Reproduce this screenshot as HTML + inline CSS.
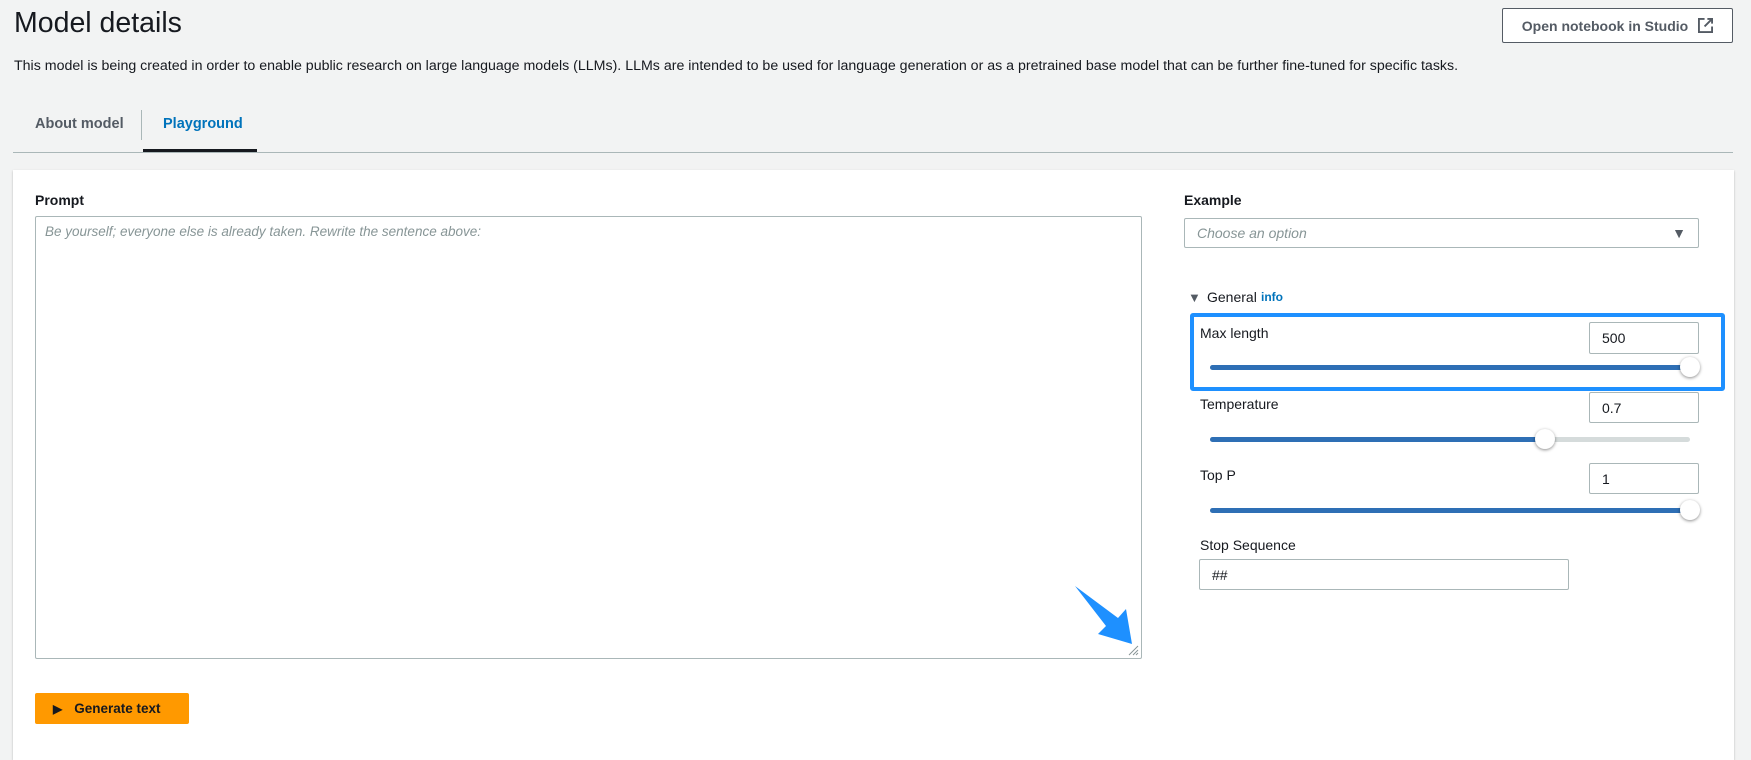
<!DOCTYPE html>
<html><head><meta charset="utf-8"><style>
*{box-sizing:border-box;margin:0;padding:0}
body{width:1751px;height:744px;overflow:hidden;background:#f2f3f3;font-family:"Liberation Sans",sans-serif;color:#16191f;position:relative}
.a{position:absolute}
.lbl{font-size:14px;color:#16191f}
.inp{position:absolute;background:#fff;border:1px solid #aab7b8;border-radius:2px;font-size:14px;padding-left:12px;display:flex;align-items:center}
.track{position:absolute;height:5px;border-radius:3px;background:#d5dbdb}
.fill{position:absolute;left:0;top:0;height:5px;border-radius:3px;background:#2e6fb5}
.thumb{position:absolute;width:20px;height:20px;border-radius:50%;background:#fff;box-shadow:0 1px 3px rgba(0,0,0,.45);top:-8px}
</style></head><body>
<div class="a" style="left:14px;top:7px;font-size:28.5px;">Model details</div>
<div class="a" style="left:14px;top:58px;font-size:14.2px;">This model is being created in order to enable public research on large language models (LLMs). LLMs are intended to be used for language generation or as a pretrained base model that can be further fine-tuned for specific tasks.</div>
<div class="a" style="left:1502px;top:8px;width:231px;height:35px;border:1px solid #545b64;background:#fff;font-size:14px;font-weight:bold;color:#545b64;display:flex;align-items:center;justify-content:center;gap:10px;border-radius:2px">Open notebook in Studio
<svg width="15" height="15" viewBox="0 0 16 16" fill="none" stroke="#545b64" stroke-width="2"><path d="M7 1H1v14h14V9M10 1h5v5M15 1L7 9"/></svg></div>
<div class="a" style="left:35px;top:116px;font-size:14.5px;font-weight:bold;color:#545b64">About model</div>
<div class="a" style="left:141px;top:110px;width:1px;height:30px;background:#aab7b8"></div>
<div class="a" style="left:163px;top:116px;font-size:14.5px;font-weight:bold;color:#0073bb">Playground</div>
<div class="a" style="left:13px;top:152px;width:1720px;height:1px;background:#aab7b8"></div>
<div class="a" style="left:143px;top:149px;width:114px;height:3px;background:#16191f"></div>
<div class="a" style="left:13px;top:170px;width:1721px;height:590px;background:#fff;box-shadow:0 1px 2px rgba(0,0,0,.25)"></div>
<div class="a lbl" style="left:35px;top:192px;font-weight:bold">Prompt</div>
<div class="a" style="left:35px;top:216px;width:1107px;height:443px;border:1px solid #aab7b8;border-radius:2px"></div>
<div class="a" style="left:45px;top:224px;font-size:13.5px;font-style:italic;color:#879596">Be yourself; everyone else is already taken. Rewrite the sentence above:</div>
<svg class="a" style="left:1126px;top:643px" width="13" height="13"><path d="M12 3L3 12M12 7L7 12M12 10L10 12" stroke="#879596"/></svg>
<svg class="a" style="left:1070px;top:584px" width="66" height="64" viewBox="0 0 66 64"><path d="M5 2 L36 42 L28 50 L62 60 L56 25 L48 34 Z" fill="#1e90ff"/></svg>
<div class="a" style="left:35px;top:693px;width:154px;height:31px;background:#f90;border-radius:2px;font-size:13.5px;font-weight:bold;color:#16191f;display:flex;align-items:center;padding-left:18px;gap:12px"><span style="font-size:12px">▶</span>Generate text</div>
<div class="a lbl" style="left:1184px;top:192px;font-weight:bold">Example</div>
<div class="inp" style="left:1184px;top:218px;width:515px;height:30px;font-style:italic;color:#879596">Choose an option<span style="position:absolute;right:12px;color:#545b64;font-style:normal;font-size:14px">▼</span></div>
<div class="a" style="left:1188px;top:290px;font-size:13px;color:#545b64">▼</div>
<div class="a lbl" style="left:1207px;top:289px">General</div>
<div class="a" style="left:1261px;top:290px;font-size:12px;font-weight:bold;color:#0073bb">info</div>
<div class="a" style="left:1190px;top:313px;width:535px;height:78px;border:4.5px solid #1e90ff;border-radius:3px"></div>
<div class="a lbl" style="left:1200px;top:325px">Max length</div>
<div class="inp" style="left:1589px;top:322px;width:110px;height:32px">500</div>
<div class="track" style="left:1210px;top:365px;width:480px"><div class="fill" style="width:480px"></div><div class="thumb" style="left:470px"></div></div>
<div class="a lbl" style="left:1200px;top:396px">Temperature</div>
<div class="inp" style="left:1589px;top:392px;width:110px;height:31px">0.7</div>
<div class="track" style="left:1210px;top:437px;width:480px"><div class="fill" style="width:335px"></div><div class="thumb" style="left:325px"></div></div>
<div class="a lbl" style="left:1200px;top:467px">Top P</div>
<div class="inp" style="left:1589px;top:463px;width:110px;height:31px">1</div>
<div class="track" style="left:1210px;top:508px;width:480px"><div class="fill" style="width:480px"></div><div class="thumb" style="left:470px"></div></div>
<div class="a lbl" style="left:1200px;top:537px">Stop Sequence</div>
<div class="inp" style="left:1199px;top:559px;width:370px;height:31px">##</div>
</body></html>
